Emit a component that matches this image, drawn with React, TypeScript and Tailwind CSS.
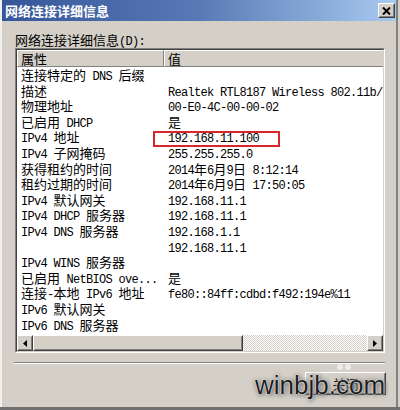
import React from 'react';

interface Row {
  label: string;
  value: string;
}

const rows: Row[] = [
  { label: '连接特定的 DNS 后缀', value: '' },
  { label: '描述', value: 'Realtek RTL8187 Wireless 802.11b/g 54Mbps USB 2.0 Network Adapter' },
  { label: '物理地址', value: '00-E0-4C-00-00-02' },
  { label: '已启用 DHCP', value: '是' },
  { label: 'IPv4 地址', value: '192.168.11.100' },
  { label: 'IPv4 子网掩码', value: '255.255.255.0' },
  { label: '获得租约的时间', value: '2014年6月9日 8:12:14' },
  { label: '租约过期的时间', value: '2014年6月9日 17:50:05' },
  { label: 'IPv4 默认网关', value: '192.168.11.1' },
  { label: 'IPv4 DHCP 服务器', value: '192.168.11.1' },
  { label: 'IPv4 DNS 服务器', value: '192.168.1.1' },
  { label: '', value: '192.168.11.1' },
  { label: 'IPv4 WINS 服务器', value: '' },
  { label: '已启用 NetBIOS ove...', value: '是' },
  { label: '连接-本地 IPv6 地址', value: 'fe80::84ff:cdbd:f492:194e%11' },
  { label: 'IPv6 默认网关', value: '' },
  { label: 'IPv6 DNS 服务器', value: '' },
];

// SimSun-ish: latin half width, CJK full width
const Mixed: React.FC<{ text: string }> = ({ text }) => {
  const parts = text.match(/[\x00-\x7f]+|[^\x00-\x7f]+/g) ?? [];
  return (
    <>
      {parts.map((p, i) =>
        /^[\x00-\x7f]/.test(p) ? (
          <span key={i} className="font-['Liberation_Mono',monospace] text-[12px] tracking-[-0.7px]">
            {p}
          </span>
        ) : (
          <span key={i}>{p}</span>
        )
      )}
    </>
  );
};

const Bevel: React.FC<{ className?: string; children?: React.ReactNode }> = ({ className = '', children }) => (
  <div className={`border border-t-white border-l-white border-b-[#404040] border-r-[#404040] bg-[#d4d0c8] ${className}`}>
    <div className="flex h-full w-full items-center justify-center border border-t-[#d4d0c8] border-l-[#d4d0c8] border-b-[#808080] border-r-[#808080]">
      {children}
    </div>
  </div>
);

const Arrow: React.FC<{ dir: 'left' | 'right' }> = ({ dir }) => (
  <svg width="4" height="7" viewBox="0 0 4 7">
    {dir === 'left' ? <path d="M4 0 L0 3.5 L4 7 Z" fill="#000" /> : <path d="M0 0 L4 3.5 L0 7 Z" fill="#000" />}
  </svg>
);

export default function App() {
  return (
    <div className="relative h-[410px] w-[400px] overflow-hidden border-b-[3px] border-b-[#6f6f6f] bg-[#d4d0c8] font-['Noto_Sans_CJK_SC',sans-serif] text-[13px] text-black">
      <div className="flex h-full w-[398px] flex-col border-l-2 border-r-2 border-l-[#f2f1ed] border-r-[#808080]">
        {/* title bar */}
        <div className="flex h-[21px] items-center justify-between bg-[linear-gradient(90deg,#36569a_0%,#5879b5_50%,#a8caf0_100%)] pl-[3px] pr-[1px]">
          <span className="text-[13px] font-bold leading-none text-white">网络连接详细信息</span>
          <Bevel className="h-[15px] w-[17px]">
            <svg width="9" height="8" viewBox="0 0 9 8">
              <path d="M1 0.5 L8 7.5 M8 0.5 L1 7.5" stroke="#000" strokeWidth="2" />
            </svg>
          </Bevel>
        </div>

        <div className="flex flex-col pl-[13px]">
          <div className="h-[27px] whitespace-pre pt-[11px] leading-[15px]">
            <Mixed text="网络连接详细信息(D):" />
          </div>

          {/* list view */}
          <div className="h-[305px] w-[370px] border border-t-[#808080] border-l-[#808080] border-b-white border-r-white">
            <div className="flex h-full flex-col border border-t-[#404040] border-l-[#404040] border-b-[#d4d0c8] border-r-[#d4d0c8] bg-white">
              <div className="flex h-[17px] shrink-0 bg-[#d4d0c8] leading-[15px]">
                <div className="w-[147px] border border-t-white border-l-white border-b-[#808080] border-r-[#808080] pl-[3px]">属性</div>
                <div className="flex-1 border border-r-0 border-t-white border-l-white border-b-[#808080] pl-[3px]">值</div>
              </div>
              <div className="flex-1">
                {rows.map((r, i) => (
                  <div key={i} className="flex h-[15.6px] whitespace-pre leading-[15.6px]">
                    <div className="w-[147px] shrink-0 pl-[4px]">
                      <Mixed text={r.label} />
                    </div>
                    <div className="min-w-0 flex-1 overflow-hidden pl-[4px]">
                      <Mixed text={r.value} />
                    </div>
                  </div>
                ))}
              </div>
              {/* horizontal scrollbar */}
              <div className="flex h-[16px] shrink-0">
                <Bevel className="h-[16px] w-[16px]">
                  <Arrow dir="left" />
                </Bevel>
                <Bevel className="h-[16px] w-[210px]" />
                <div className="flex-1 bg-[repeating-conic-gradient(#ffffff_0_25%,#d4d0c8_0_50%)] bg-[length:2px_2px]" />
                <Bevel className="h-[16px] w-[16px]">
                  <Arrow dir="right" />
                </Bevel>
              </div>
            </div>
          </div>

          {/* separator */}
          <div className="mt-[9px] w-[371px] -translate-x-px border-t border-b border-t-[#808080] border-b-white" />

          <div className="mt-[8px] flex justify-end pr-[10px]">
            <Bevel className="h-[23px] w-[81px]">
              <span className="leading-none">关闭</span>
            </Bevel>
          </div>
        </div>
      </div>

      {/* red annotation box */}
      <div className="absolute left-[153px] top-[131px] h-[16px] w-[127px] border-2 border-[#d8262a]" />

      {/* watermark */}
      <div className="absolute left-[337px] top-[364px] flex gap-[2px]">
        <div className="h-[6px] w-[6px] rounded-full bg-[#ececec]" />
        <div className="h-[6px] w-[6px] rounded-full bg-[#ececec]" />
      </div>
      <div className="absolute left-[255px] top-[372px] font-['Liberation_Sans',sans-serif] text-[26px] leading-[26px] text-[#1c1c1c] [text-shadow:0_0_1px_#ffffff,0_0_2px_#ffffff,1px_1px_4px_#5a5a5a,0_0_5px_#8a8a8a]">
        winbjb.com
      </div>
    </div>
  );
}
